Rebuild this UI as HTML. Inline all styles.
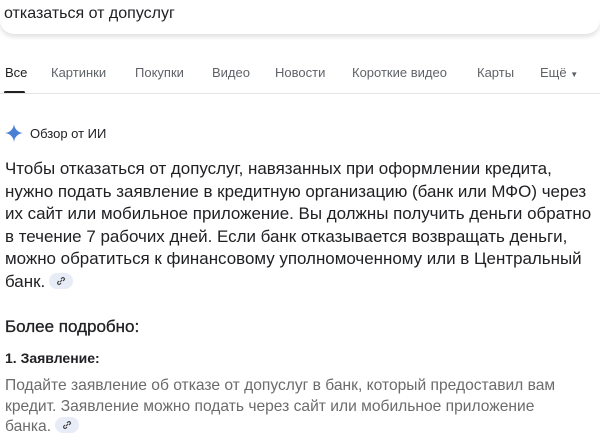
<html><head><style>
body{margin:0;width:600px;height:441px;overflow:hidden;background:#fff;font-family:"Liberation Sans",sans-serif;color:#1f1f1f;position:relative}
.a{position:absolute;white-space:nowrap}
.tab{position:absolute;top:65px;font-size:13px;color:#5f6368}
.chip{display:inline-block;width:24px;height:16px;border-radius:8px;background:#e8ecf7;vertical-align:-2px;margin-left:4px;position:relative}
.chip svg{position:absolute;left:7px;top:3px}
</style></head><body>
<div class="a" style="left:0;top:0;width:600px;height:34px;box-shadow:0 3px 5px rgba(0,0,0,.12);border-radius:0 0 14px 14px"></div>
<div class="a" style="left:4px;top:5px;font-size:16px;color:#202124">отказаться от допуслуг</div>
<div class="tab" style="left:5px;color:#202124">Все</div>
<div class="tab" style="left:51px">Картинки</div>
<div class="tab" style="left:135px">Покупки</div>
<div class="tab" style="left:212px">Видео</div>
<div class="tab" style="left:275px">Новости</div>
<div class="tab" style="left:352px">Короткие видео</div>
<div class="tab" style="left:477px">Карты</div>
<div class="tab" style="left:540px">Ещё <span style="font-size:8px">▼</span></div>
<div class="a" style="left:4px;top:91px;width:21px;height:3px;background:#202124;border-radius:2px"></div>
<div class="a" style="left:0;top:93px;width:600px;height:1px;background:#e6e6e6"></div>
<svg class="a" style="left:5px;top:124px" width="18" height="18" viewBox="0 0 18 18"><path d="M9 0C9.5 5 13 8.5 18 9 13 9.5 9.5 13 9 18 8.5 13 5 9.5 0 9 5 8.5 8.5 5 9 0Z" fill="#4a7fd6"/></svg>
<div class="a" style="left:30px;top:126px;font-size:13px;color:#202124">Обзор от ИИ</div>
<div class="a" style="left:5px;top:158px;font-size:16.95px;line-height:22.6px;color:#202124">Чтобы отказаться от допуслуг, навязанных при оформлении кредита,<br>нужно подать заявление в кредитную организацию (банк или МФО) через<br>их сайт или мобильное приложение. Вы должны получить деньги обратно<br>в течение 7 рабочих дней. Если банк отказывается возвращать деньги,<br>можно обратиться к финансовому уполномоченному или в Центральный<br>банк.<span class="chip"><svg width="10" height="10" viewBox="0 0 10 10"><path d="M4 6L6 4M3 5L2 6a1.4 1.4 0 0 0 2 2l1-1M7 5l1-1a1.4 1.4 0 0 0-2-2L5 3" stroke="#444" stroke-width="1.2" fill="none"/></svg></span></div>
<div class="a" style="left:5px;top:317px;font-size:17px;color:#202124;-webkit-text-stroke:0.3px #202124">Более подробно:</div>
<div class="a" style="left:5px;top:350px;font-size:14px;font-weight:bold;color:#202124">1. Заявление:</div>
<div class="a" style="left:5px;top:376px;font-size:15.6px;line-height:20.5px;color:#6b6b6b">Подайте заявление об отказе от допуслуг в банк, который предоставил вам<br>кредит. Заявление можно подать через сайт или мобильное приложение<br>банка.<span class="chip"><svg width="10" height="10" viewBox="0 0 10 10"><path d="M4 6L6 4M3 5L2 6a1.4 1.4 0 0 0 2 2l1-1M7 5l1-1a1.4 1.4 0 0 0-2-2L5 3" stroke="#444" stroke-width="1.2" fill="none"/></svg></span></div>
</body></html>
